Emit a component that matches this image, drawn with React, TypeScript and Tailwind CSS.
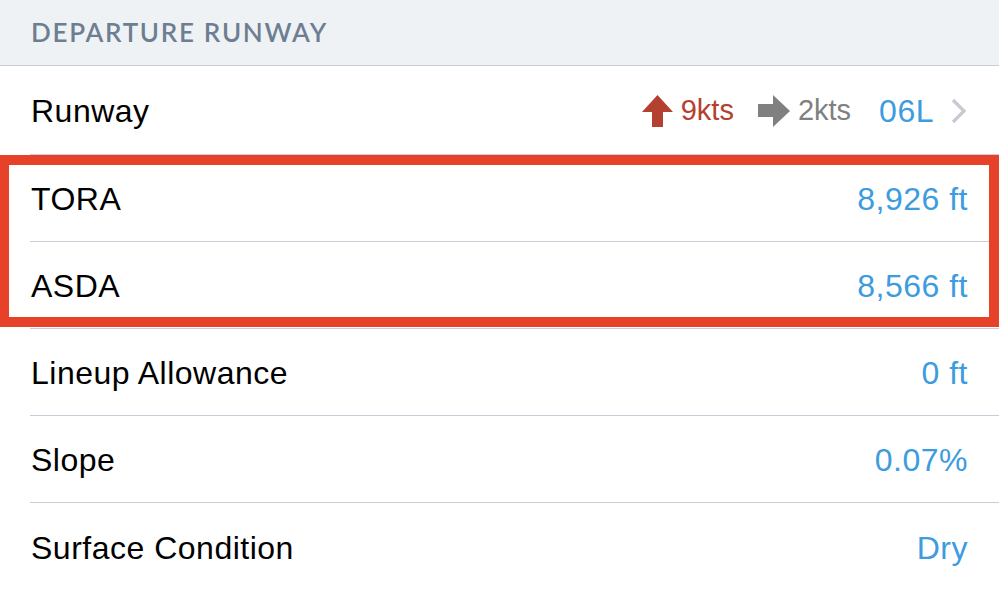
const rows = [
  { label: "TORA", value: "8,926 ft" },
  { label: "ASDA", value: "8,566 ft" },
  { label: "Lineup Allowance", value: "0 ft" },
  { label: "Slope", value: "0.07%" },
  { label: "Surface Condition", value: "Dry" },
];

function UpArrow() {
  return (
    <svg width="31" height="32" viewBox="0 0 31 32" className="block">
      <polygon points="15.5,0 31,17 21,17 21,32 10,32 10,17 0,17" fill="#b4412f" />
    </svg>
  );
}

function RightArrow() {
  return (
    <svg width="32" height="32" viewBox="0 0 32 32" className="block">
      <polygon points="32,16 15,0 15,9 0,9 0,22 15,22 15,32" fill="#808080" />
    </svg>
  );
}

function Chevron() {
  return (
    <svg width="18" height="26" viewBox="0 0 18 26" className="block">
      <polyline points="4,2 15,13 4,24" fill="none" stroke="#c6cbd2" strokeWidth="3.2" />
    </svg>
  );
}

export default function App() {
  return (
    <div
      className="relative h-[590px] w-[999px] overflow-hidden bg-white text-[32px] tracking-[0.5px] text-black"
      style={{ fontFamily: '"Liberation Sans", Arial, sans-serif' }}
    >
      <div className="flex h-[66px] items-center border-b border-[#c8ced8] bg-[#eef2f5] pl-[31px]">
        <span
          className="text-[26px] font-semibold tracking-[1.7px] text-[#6e7e92]"
          style={{ fontFamily: "Lato, sans-serif" }}
        >
          DEPARTURE RUNWAY
        </span>
      </div>

      <div className="pl-[30px]">
        <div className="flex h-[89px] items-center justify-between border-b border-[#c8ced8] pl-px pr-[32px] pt-[2px]">
          <span>Runway</span>
          <div className="flex items-center">
            <UpArrow />
            <span className="ml-[8px] text-[29px] tracking-normal text-[#b4412f]">9kts</span>
            <span className="ml-[24px]">
              <RightArrow />
            </span>
            <span className="ml-[8px] text-[29px] tracking-normal text-[#808080]">2kts</span>
            <span className="ml-[28px] text-[#3d9be0]">06L</span>
            <span className="ml-[15px]">
              <Chevron />
            </span>
          </div>
        </div>

        {rows.map((row, i) => (
          <div
            key={row.label}
            className={
              i === rows.length - 1
                ? "flex h-[87px] items-center justify-between pl-px pr-[31px] pt-[2px]"
                : "flex h-[87px] items-center justify-between border-b border-[#c8ced8] pl-px pr-[31px] pt-[2px]"
            }
          >
            <span>{row.label}</span>
            <span className="text-[#3d9be0]">{row.value}</span>
          </div>
        ))}
      </div>

      <div className="absolute left-0 top-[155px] h-[172px] w-[999px] border-[10px] border-l-[9px] border-[#e8412a]" />
    </div>
  );
}
